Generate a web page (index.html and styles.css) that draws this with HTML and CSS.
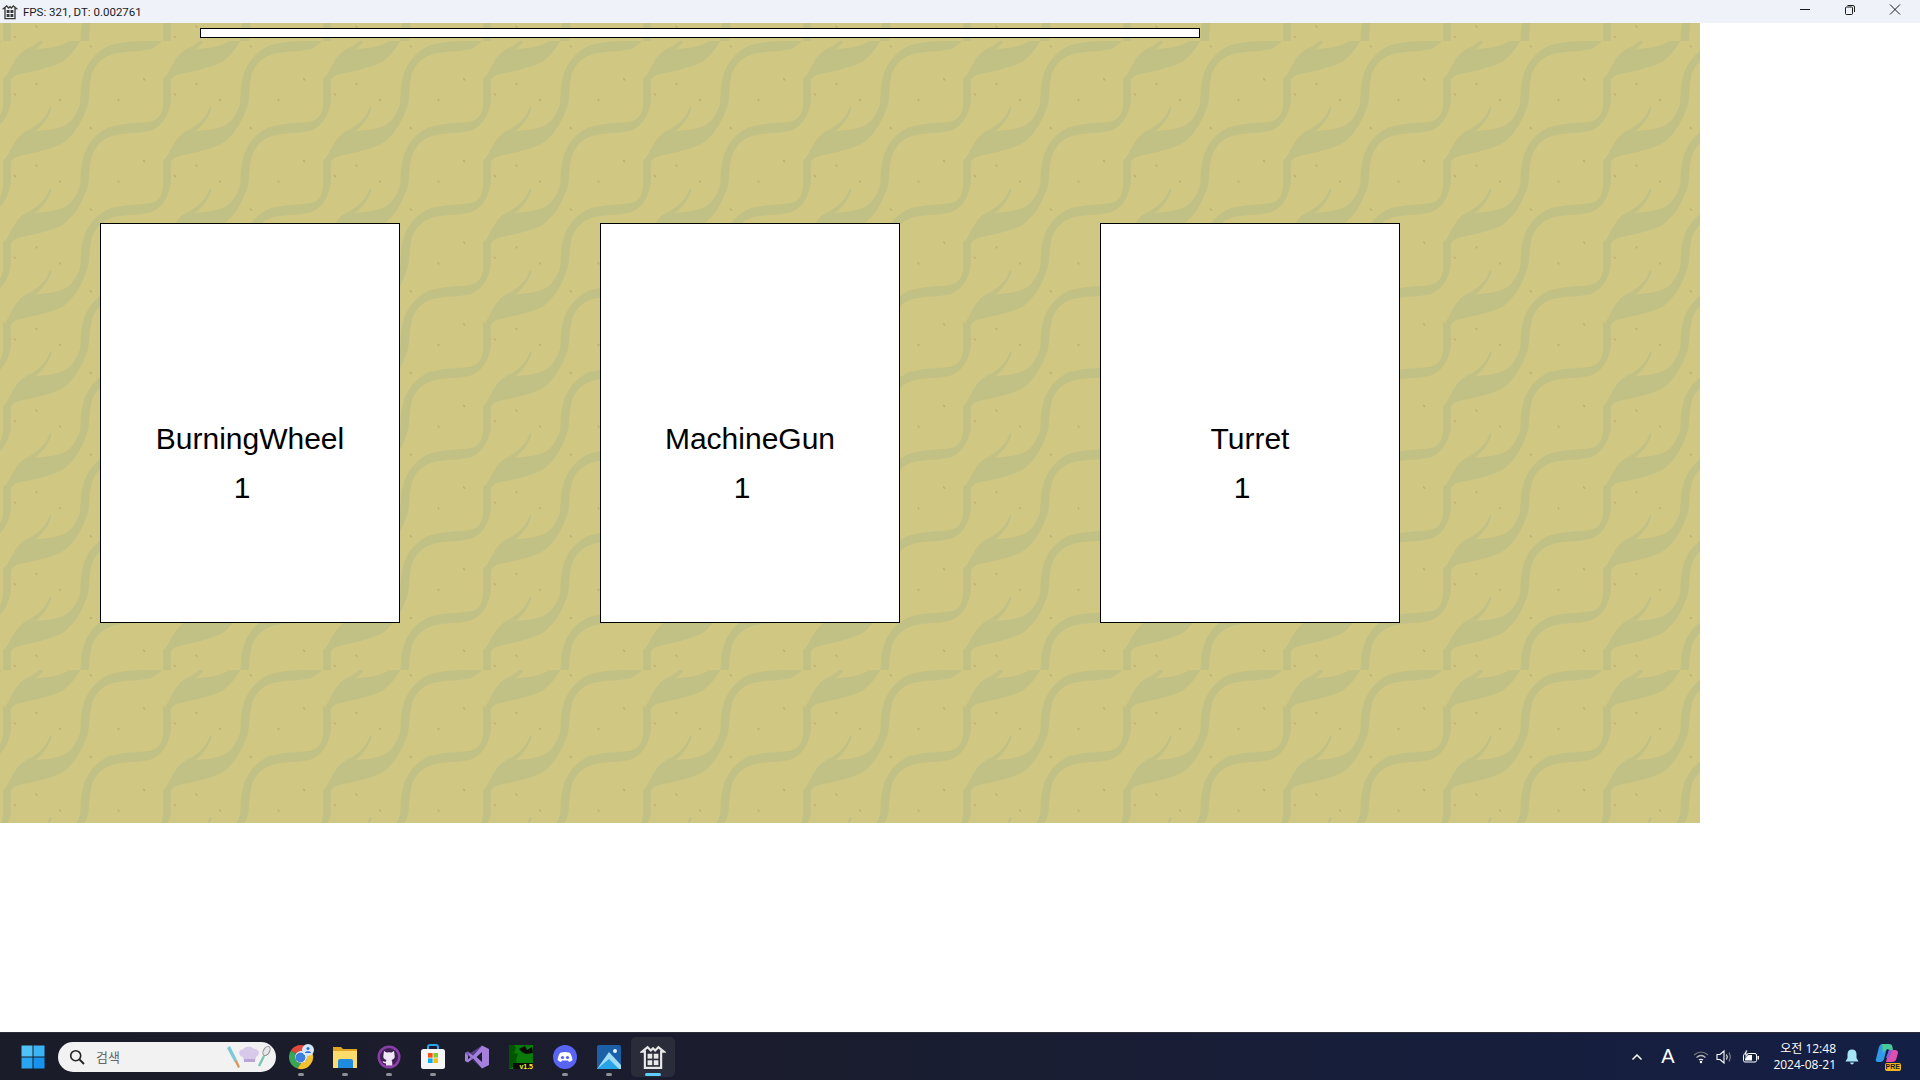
FILE: index.html
```html
<!DOCTYPE html>
<html lang="en">
<head>
	<meta charset="UTF-8">
	<title>FPS: 321, DT: 0.002761</title>
	<link rel="stylesheet" href="styles.css">
</head>
<body>
	<svg class="defs" width="0" height="0">
		<defs>
			<symbol id="app" viewBox="0 0 24 24">
				<path d="M2 7 L7 3 L10 6 L12 4 L14 6 L17 3 L22 7 L19.5 7 L19.5 22 L4.5 22 L4.5 7 Z" fill="none" stroke="currentColor" stroke-width="2"/>
				<rect x="7" y="9" width="4.3" height="4.5" fill="currentColor"/>
				<rect x="12.7" y="9" width="4.3" height="4.5" fill="currentColor"/>
				<rect x="7" y="15" width="4.3" height="4.5" fill="currentColor"/>
				<rect x="12.7" y="15" width="4.3" height="4.5" fill="currentColor"/>
			</symbol>
			<g id="wave">
				<path d="M240 245 C243 210 243 180 250 160 C258 125 285 90 320 72 C350 58 400 58 450 52 C478 48 488 25 490 -5 L490 -80 L512 -80 L512 -5 C505 30 490 62 455 78 C420 88 370 85 335 95 C305 105 280 130 273 165 C268 195 268 220 264 245 Z"/>
				<path d="M240 243 C232 270 215 300 190 310 C165 322 130 322 105 326 C125 310 148 285 155 252 L148 255 C140 285 110 310 85 322 C55 335 40 365 25 395 L8 420 L30 420 C40 405 50 400 70 397 C110 388 160 378 190 360 C225 335 250 290 264 243 Z"/>
				<g class="specks">
					<path d="M107 181 L112 187"/>
					<path d="M42 212 L47 218"/>
					<path d="M178 229 L183 235"/>
					<path d="M270 68 L275 74"/>
					<path d="M353 229 L358 235"/>
					<path d="M430 167 L435 173"/>
				</g>
			</g>
			<g id="waves">
				<use href="#wave" y="-245"/>
				<use href="#wave"/>
				<use href="#wave" y="245"/>
				<use href="#wave" y="490"/>
				<use href="#wave" y="735"/>
				<use href="#wave" y="980"/>
				<use href="#wave" y="1225"/>
				<use href="#wave" y="1470"/>
				<use href="#wave" y="1715"/>
				<use href="#wave" y="1960"/>
			</g>
			<pattern id="sand" x="0" y="18" width="160" height="629" patternUnits="userSpaceOnUse">
				<g class="sand-waves" transform="scale(0.3333) translate(0,-55)">
					<use href="#waves"/>
					<use href="#waves" x="-480"/>
				</g>
			</pattern>
		</defs>
	</svg>

	<div class="titlebar">
		<svg class="title-icon"><use href="#app"/></svg>
		<span class="title-text">FPS: 321, DT: 0.002761</span>
		<div class="win-btns">
			<div class="win-btn"><svg width="12" height="12" viewBox="0 0 12 12"><path d="M1 5.5 H11" stroke="#1a1a1a"/></svg></div>
			<div class="win-btn"><svg width="12" height="12" viewBox="0 0 12 12"><rect x="1.5" y="3" width="7" height="7.5" rx="1" fill="none" stroke="#1a1a1a"/><path d="M3.5 1.5 H9 Q10.5 1.5 10.5 3 V8" fill="none" stroke="#1a1a1a"/></svg></div>
			<div class="win-btn"><svg width="12" height="12" viewBox="0 0 12 12"><path d="M1 0.5 L11 10.5 M11 0.5 L1 10.5" stroke="#1a1a1a"/></svg></div>
		</div>
	</div>

	<div class="client">
		<div class="game">
			<svg class="game-bg" width="1700" height="800"><rect width="1700" height="800" fill="#cfc782"/><rect width="1700" height="800" fill="url(#sand)"/></svg>
			<div class="xp-bar"></div>
			<div class="cards">
				<div class="card">
					<div class="card-name">BurningWheel</div>
					<div class="card-level">1</div>
				</div>
				<div class="card">
					<div class="card-name">MachineGun</div>
					<div class="card-level">1</div>
				</div>
				<div class="card">
					<div class="card-name">Turret</div>
					<div class="card-level">1</div>
				</div>
			</div>
		</div>
	</div>

	<div class="taskbar">
		<div class="start">
			<svg width="24" height="24" viewBox="0 0 24 24">
				<rect x="0.5" y="0.5" width="11" height="11" fill="#4fc3f7"/>
				<rect x="12.5" y="0.5" width="11" height="11" fill="#3bb4f5"/>
				<rect x="0.5" y="12.5" width="11" height="11" fill="#29a5f2"/>
				<rect x="12.5" y="12.5" width="11" height="11" fill="#1793ee"/>
			</svg>
		</div>
		<div class="search">
			<svg class="search-glass" width="16" height="16" viewBox="0 0 16 16"><circle cx="6.7" cy="6.7" r="5" fill="none" stroke="#222" stroke-width="1.6"/><path d="M10.5 10.5 L15 15" stroke="#222" stroke-width="1.8"/></svg>
			<span class="search-text">검색</span>
			<svg class="search-art" width="48" height="26" viewBox="0 0 48 26">
				<path d="M3 4 L6 2 L13 16 L10.5 18 Z" fill="#7ec8d8"/>
				<path d="M10.5 17 L13 16 L16 23 L14 24 Z" fill="#d99a62"/>
				<path d="M19 13 C14 12 14 5 19 5.5 C21 1.5 28 1.5 30 5 C36 4 36 12 32 13 L31 17 L20 17 Z" fill="#d8c8ea"/>
				<path d="M20 15 L31 15 L31 18 L20 18 Z" fill="#b9a6d6"/>
				<path d="M35 22 L40 12" stroke="#7cc4b4" stroke-width="2.4"/>
				<ellipse cx="42.5" cy="7" rx="3" ry="5" transform="rotate(30 42.5 7)" fill="#e6e6e6" stroke="#8a8a8a"/>
			</svg>
		</div>
		<div class="apps">
			<div class="app run">
				<svg width="26" height="26" viewBox="0 0 26 26">
					<path d="M13 1 A12 12 0 0 1 23.4 7 L13 7 A6 6 0 0 0 7.8 10 L2.9 6.5 A12 12 0 0 1 13 1Z" fill="#e04a3b"/>
					<path d="M2.9 6.5 L7.8 10 A6 6 0 0 0 13 19 L9.5 24.5 A12 12 0 0 1 2.9 6.5Z" fill="#3aa655"/>
					<path d="M23.4 7 A12 12 0 0 1 9.5 24.5 L13 19 A6 6 0 0 0 18 10 Z" fill="#f2c230"/>
					<circle cx="13" cy="13" r="6" fill="#fff"/>
					<circle cx="12.5" cy="13.5" r="5" fill="#3f7fe0"/>
					<circle cx="20" cy="6" r="6" fill="#d6e6fb"/>
					<circle cx="20" cy="4.6" r="1.5" fill="#2f6fd0"/>
					<path d="M17 9 C17 6.5 23 6.5 23 9Z" fill="#2f6fd0"/>
				</svg>
			</div>
			<div class="app run">
				<svg width="26" height="24" viewBox="0 0 26 24">
					<path d="M1 2 H9 L11 4 H25 V22 H1Z" fill="#e0a526"/>
					<path d="M1 6 H25 V23 H1Z" fill="#fbdc6a"/>
					<path d="M6 16 Q6 14 8 14 H19 Q21 14 21 16 V23 H6Z" fill="#1f8ce0"/>
				</svg>
			</div>
			<div class="app run">
				<svg width="24" height="24" viewBox="0 0 24 24">
					<circle cx="12" cy="12" r="11.5" fill="#8a3fa8"/>
					<circle cx="12" cy="12" r="9" fill="#3e1f52"/>
					<path d="M7 6 L9.5 7.5 Q12 7 14.5 7.5 L17 6 L17.5 9.5 Q18.5 14 14.5 15 Q15.5 16 15.3 20.5 H9 L9 18.5 Q6 18.5 5.5 16 Q7.5 17 9 16.5 Q9 15.5 9.5 15 Q5.5 14 6.5 9.5Z" fill="#f0e6f5"/>
				</svg>
			</div>
			<div class="app run">
				<svg width="24" height="26" viewBox="0 0 24 26">
					<path d="M7 7 V3 Q7 1 9 1 H15 Q17 1 17 3 V7" fill="none" stroke="#2aa4e8" stroke-width="2"/>
					<rect y="5" width="24" height="20" rx="2.5" fill="#f6f6f6"/>
					<rect x="7" y="9" width="4.6" height="4.6" fill="#f1511b"/>
					<rect x="12.4" y="9" width="4.6" height="4.6" fill="#80cc28"/>
					<rect x="7" y="14.4" width="4.6" height="4.6" fill="#00adef"/>
					<rect x="12.4" y="14.4" width="4.6" height="4.6" fill="#fbbc09"/>
				</svg>
			</div>
			<div class="app">
				<svg width="24" height="24" viewBox="0 0 24 24">
					<path d="M17 0.5 L24 4 V20 L17 23.5 L8 13.5 L3 17.5 L0 16 V8 L3 6.5 L8 10.5Z M17 7 L11.5 12 L17 17Z M3 9.5 V14.5 L5.5 12Z" fill="#a47fdc" fill-rule="evenodd"/>
					<path d="M17 0.5 L8 10.5 L3 6.5 L0 8 L17 23.5 L3 9.5Z" fill="#6f4bb0" opacity="0.7"/>
				</svg>
			</div>
			<div class="app green-app">
				<svg width="24" height="24" viewBox="0 0 24 24">
					<rect width="24" height="24" fill="#0a7a0a"/>
					<path d="M0 0 H5 L7 3 L5 8 L9 9 L7 15 L8 20 L0 24Z" fill="#050"/>
					<path d="M10 4 L16 1 L18 5 L23 2 L24 8 L17 9 L13 7Z" fill="#0a0a0a"/>
					<rect x="4" y="18" width="20" height="6" fill="#0a0a0a"/>
				</svg>
				<span class="green-text">v1.5</span>
			</div>
			<div class="app run">
				<svg width="24" height="24" viewBox="0 0 24 24">
					<circle cx="12" cy="12" r="12" fill="#5865f2"/>
					<path d="M8 7.5 Q12 6.5 16 7.5 Q18.5 8.5 19.5 15 Q18 16.5 16 17 L15 15.5 L9 15.5 L8 17 Q6 16.5 4.5 15 Q5.5 8.5 8 7.5Z" fill="#fff"/>
					<circle cx="9.5" cy="12.5" r="1.6" fill="#5865f2"/>
					<circle cx="14.5" cy="12.5" r="1.6" fill="#5865f2"/>
				</svg>
			</div>
			<div class="app run">
				<svg width="24" height="24" viewBox="0 0 24 24">
					<rect width="24" height="24" rx="2" fill="#1a5fa8"/>
					<path d="M0 24 L12 7 L24 20 V24Z" fill="#9fdcf5"/>
					<path d="M0 24 L12 14 L22 24Z" fill="#29a3e8"/>
					<circle cx="18" cy="6" r="2" fill="#e8f6fd"/>
				</svg>
			</div>
			<div class="app active">
				<svg class="active-icon"><use href="#app"/></svg>
			</div>
		</div>
		<div class="tray">
			<svg class="tray-chev" width="12" height="8" viewBox="0 0 12 8"><path d="M1.5 6.5 L6 2 L10.5 6.5" fill="none" stroke="#fff" stroke-width="1.5"/></svg>
			<span class="tray-ime">A</span>
			<svg class="tray-wifi" width="16" height="14" viewBox="0 0 16 14">
				<path d="M1 5 Q8 -1 15 5" fill="none" stroke="#777" stroke-width="1.2"/>
				<path d="M3.5 7.5 Q8 3.5 12.5 7.5" fill="none" stroke="#bbb" stroke-width="1.2"/>
				<path d="M6 10 Q8 8.5 10 10" fill="none" stroke="#fff" stroke-width="1.2"/>
				<circle cx="8" cy="12" r="1.2" fill="#fff"/>
			</svg>
			<svg class="tray-sound" width="18" height="16" viewBox="0 0 18 16">
				<path d="M1 5.5 H4 L8 2 V14 L4 10.5 H1Z" fill="none" stroke="#fff" stroke-width="1.1"/>
				<path d="M10.5 5.5 Q12 8 10.5 10.5" fill="none" stroke="#fff" stroke-width="1.1"/>
				<path d="M13 3.5 Q15.5 8 13 12.5" fill="none" stroke="#888" stroke-width="1.1"/>
			</svg>
			<svg class="tray-bat" width="18" height="14" viewBox="0 0 18 14">
				<rect x="1.5" y="3.5" width="13" height="8.5" rx="1.5" fill="none" stroke="#fff"/>
				<rect x="3" y="5" width="7" height="5.5" fill="#fff"/>
				<rect x="15.5" y="6" width="1.5" height="3.5" fill="#fff"/>
				<path d="M4 0 L1.5 5 L4 5 L2.5 9 L7 4 L4.5 4 L5.5 0Z" fill="#fff" stroke="#16203a" stroke-width="0.6"/>
			</svg>
			<div class="clock">
				<div>오전 12:48</div>
				<div>2024-08-21</div>
			</div>
			<svg class="tray-bell" width="14" height="16" viewBox="0 0 14 16">
				<path d="M7 0.5 Q2.5 0.5 2.5 5.5 V9 L0.5 12.5 H13.5 L11.5 9 V5.5 Q11.5 0.5 7 0.5Z" fill="#a6e4f7"/>
				<path d="M5 13.5 H9 Q8.5 15.5 7 15.5 Q5.5 15.5 5 13.5Z" fill="#a6e4f7"/>
			</svg>
			<div class="copilot">
				<svg width="24" height="22" viewBox="0 0 24 22">
					<path d="M7 1 H13 L9 16 Q8 19 5 19 H3 Q0 19 1 16 L4 4 Q5 1 7 1Z" fill="#2f9be8"/>
					<path d="M7 1 H14 Q17 1 17.5 4 L18 8 L12 6 L8 10Z" fill="#48c99a"/>
					<path d="M14 7 H20 Q23 7 23 10 L21 17 Q20 19 17 19 H11Z" fill="#e24db0"/>
					<path d="M14 7 H18 L14 15 H11Z" fill="#8a5fd8"/>
				</svg>
				<span class="pre">PRE</span>
			</div>
		</div>
	</div>
</body>
</html>
```
FILE: styles.css
```css
*{margin: 0;padding: 0;box-sizing: border-box;}
html,body{height: 100%;}
body{
	display: flex;
	flex-direction: column;
	height: 100vh;
	overflow: hidden;
	background-color: #fff;
	font-family: "Liberation Sans", "Noto Sans CJK KR", sans-serif;
}
.defs{position: absolute;}
.sand-waves{fill: #c1c085;}
.specks path{fill: none;stroke: #c0ad6e;stroke-width: 4;}

/* 창 제목 */
.titlebar{
	display: flex;
	align-items: center;
	flex: none;
	height: 23px;
	padding-left: 2px;
	background-color: #eff2f8;
	color: #1a1a1a;
}
.title-icon{
	width: 16px;
	height: 16px;
	color: #3a3a3a;
}
.title-text{
	margin-left: 5px;
	font-family: Roboto, sans-serif;
	font-size: 11.5px;
}
.win-btns{
	display: flex;
	align-self: flex-start;
	margin-left: auto;
	padding-right: 3px;
}
.win-btn{
	display: flex;
	align-items: center;
	justify-content: center;
	width: 45px;
	height: 20px;
}

/* 게임 화면 */
.client{
	flex: 1;
	min-height: 0;
}
.game{
	position: relative;
	display: flex;
	flex-direction: column;
	width: 1700px;
	height: 800px;
	padding-top: 5px;
}
.game-bg{
	position: absolute;
	top: 0;
	left: 0;
	shape-rendering: crispEdges;
}
.xp-bar{
	position: relative;
	width: 1000px;
	height: 10px;
	margin-left: 200px;
	border: 1px solid #000;
	background-color: #fff;
}
.cards{
	position: relative;
	display: flex;
	gap: 200px;
	margin-top: 185px;
	padding-left: 100px;
}
.card{
	width: 300px;
	height: 400px;
	padding-top: 190px;
	border: 1px solid #000;
	background-color: #fff;
	font-size: 30px;
	line-height: 49px;
	text-align: center;
	color: #000;
}
.card-level{
	padding-right: 16px;
}

/* 작업 표시줄 */
.taskbar{
	display: flex;
	align-items: center;
	flex: none;
	height: 48px;
	padding-left: 21px;
	border-top: 1px solid #2c2e3a;
	background: linear-gradient(90deg, #1b1c29 0%, #1a1d2f 45%, #141f45 100%);
}
.start{
	display: flex;
	width: 37px;
}
.search{
	display: flex;
	align-items: center;
	width: 218px;
	height: 30px;
	padding: 0 4px 0 11px;
	border-radius: 15px;
	background-color: #f2f2f2;
}
.search-text{
	margin-left: 11px;
	font-family: "Noto Sans CJK KR", sans-serif;
	font-size: 13px;
	color: #666;
}
.search-art{margin-left: auto;}
.apps{
	display: flex;
	margin-left: 3px;
}
.app{
	position: relative;
	display: flex;
	align-items: center;
	justify-content: center;
	width: 44px;
	height: 40px;
}
.run:after{
	position: absolute;
	bottom: 1px;
	left: 19px;
	width: 6px;
	height: 3px;
	border-radius: 2px;
	background-color: #8f8f96;
	content: "";
}
.green-text{
	position: absolute;
	right: 10px;
	bottom: 7px;
	font-size: 7px;
	font-weight: bold;
	color: #f5f232;
}
.active{
	border-radius: 5px;
	background-color: #2a2c39;
}
.active:after{
	position: absolute;
	bottom: 1px;
	left: 14px;
	width: 16px;
	height: 3px;
	border-radius: 2px;
	background-color: #60cdff;
	content: "";
}
.active-icon{
	width: 26px;
	height: 26px;
	color: #e8e8e8;
}
.tray{
	display: flex;
	align-items: center;
	margin-left: auto;
	color: #fff;
}
.tray-chev{margin-right: 16px;}
.tray-ime{
	width: 18px;
	margin-right: 16px;
	font-size: 20px;
	text-align: center;
}
.tray-wifi{margin-right: 7px;}
.tray-sound{margin-right: 8px;}
.clock{
	width: 70px;
	margin-left: 6px;
	font-family: "Open Sans", "Noto Sans CJK KR", sans-serif;
	font-size: 12px;
	line-height: 16px;
	text-align: right;
}
.tray-bell{margin-left: 9px;}
.copilot{
	position: relative;
	width: 26px;
	height: 28px;
	margin-left: 16px;
	margin-right: 19px;
}
.pre{
	position: absolute;
	right: 0;
	bottom: 0;
	padding: 0 1px;
	border-radius: 2px;
	background-color: #f4b622;
	font-size: 7px;
	font-weight: bold;
	line-height: 8px;
	color: #1a1a1a;
}
```
